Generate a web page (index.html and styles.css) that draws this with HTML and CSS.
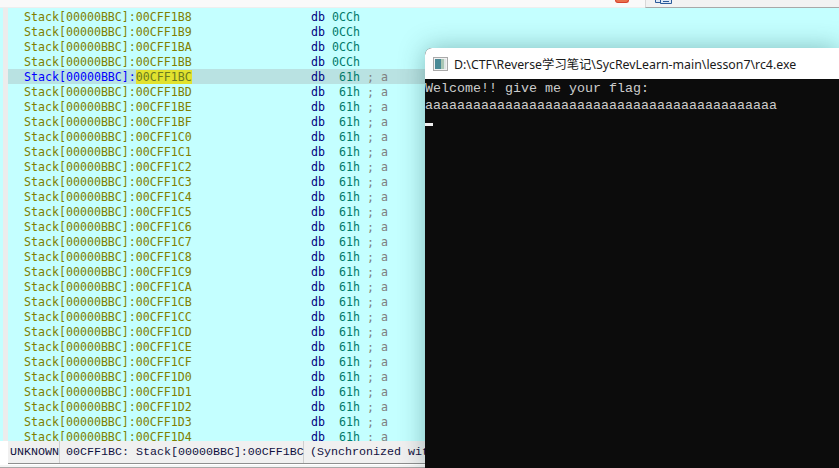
FILE: index.html
```html
<!DOCTYPE html>
<html lang="en">
<head>
<meta charset="utf-8">
<title>IDA stack view and console</title>
<link rel="stylesheet" href="styles.css">
</head>
<body>
<div class="topbar">
  <div class="top-left"><span class="red-tip"></span></div>
  <div class="top-right">
    <svg class="top-icon" width="18" height="4" viewBox="0 0 18 4"><path d="M0.5 0V2.5H5.5V0M5.5 0V3.5H16.5V0" fill="#dce8f6" stroke="#2a5a9a"/><path d="M8 1.5H14" stroke="#2a5a9a"/></svg>
  </div>
</div>
<div class="main">
  <div class="gutter"><span class="gutter-edge"></span><span class="gutter-bar"></span></div>
  <div class="listing">
    <div class="row"><span class="addr">Stack[00000BBC]:00CFF1B8</span><span class="op">db</span><span class="num wide">0CCh</span></div>
    <div class="row"><span class="addr">Stack[00000BBC]:00CFF1B9</span><span class="op">db</span><span class="num wide">0CCh</span></div>
    <div class="row"><span class="addr">Stack[00000BBC]:00CFF1BA</span><span class="op">db</span><span class="num wide">0CCh</span></div>
    <div class="row"><span class="addr">Stack[00000BBC]:00CFF1BB</span><span class="op">db</span><span class="num wide">0CCh</span></div>
    <div class="row current"><span class="addr"><span class="prefix">Stack[00000BBC]:</span><span class="mark">00CFF1BC</span></span><span class="op">db</span><span class="num">61h</span><span class="cmt">; a</span></div>
    <div class="row"><span class="addr">Stack[00000BBC]:00CFF1BD</span><span class="op">db</span><span class="num">61h</span><span class="cmt">; a</span></div>
    <div class="row"><span class="addr">Stack[00000BBC]:00CFF1BE</span><span class="op">db</span><span class="num">61h</span><span class="cmt">; a</span></div>
    <div class="row"><span class="addr">Stack[00000BBC]:00CFF1BF</span><span class="op">db</span><span class="num">61h</span><span class="cmt">; a</span></div>
    <div class="row"><span class="addr">Stack[00000BBC]:00CFF1C0</span><span class="op">db</span><span class="num">61h</span><span class="cmt">; a</span></div>
    <div class="row"><span class="addr">Stack[00000BBC]:00CFF1C1</span><span class="op">db</span><span class="num">61h</span><span class="cmt">; a</span></div>
    <div class="row"><span class="addr">Stack[00000BBC]:00CFF1C2</span><span class="op">db</span><span class="num">61h</span><span class="cmt">; a</span></div>
    <div class="row"><span class="addr">Stack[00000BBC]:00CFF1C3</span><span class="op">db</span><span class="num">61h</span><span class="cmt">; a</span></div>
    <div class="row"><span class="addr">Stack[00000BBC]:00CFF1C4</span><span class="op">db</span><span class="num">61h</span><span class="cmt">; a</span></div>
    <div class="row"><span class="addr">Stack[00000BBC]:00CFF1C5</span><span class="op">db</span><span class="num">61h</span><span class="cmt">; a</span></div>
    <div class="row"><span class="addr">Stack[00000BBC]:00CFF1C6</span><span class="op">db</span><span class="num">61h</span><span class="cmt">; a</span></div>
    <div class="row"><span class="addr">Stack[00000BBC]:00CFF1C7</span><span class="op">db</span><span class="num">61h</span><span class="cmt">; a</span></div>
    <div class="row"><span class="addr">Stack[00000BBC]:00CFF1C8</span><span class="op">db</span><span class="num">61h</span><span class="cmt">; a</span></div>
    <div class="row"><span class="addr">Stack[00000BBC]:00CFF1C9</span><span class="op">db</span><span class="num">61h</span><span class="cmt">; a</span></div>
    <div class="row"><span class="addr">Stack[00000BBC]:00CFF1CA</span><span class="op">db</span><span class="num">61h</span><span class="cmt">; a</span></div>
    <div class="row"><span class="addr">Stack[00000BBC]:00CFF1CB</span><span class="op">db</span><span class="num">61h</span><span class="cmt">; a</span></div>
    <div class="row"><span class="addr">Stack[00000BBC]:00CFF1CC</span><span class="op">db</span><span class="num">61h</span><span class="cmt">; a</span></div>
    <div class="row"><span class="addr">Stack[00000BBC]:00CFF1CD</span><span class="op">db</span><span class="num">61h</span><span class="cmt">; a</span></div>
    <div class="row"><span class="addr">Stack[00000BBC]:00CFF1CE</span><span class="op">db</span><span class="num">61h</span><span class="cmt">; a</span></div>
    <div class="row"><span class="addr">Stack[00000BBC]:00CFF1CF</span><span class="op">db</span><span class="num">61h</span><span class="cmt">; a</span></div>
    <div class="row"><span class="addr">Stack[00000BBC]:00CFF1D0</span><span class="op">db</span><span class="num">61h</span><span class="cmt">; a</span></div>
    <div class="row"><span class="addr">Stack[00000BBC]:00CFF1D1</span><span class="op">db</span><span class="num">61h</span><span class="cmt">; a</span></div>
    <div class="row"><span class="addr">Stack[00000BBC]:00CFF1D2</span><span class="op">db</span><span class="num">61h</span><span class="cmt">; a</span></div>
    <div class="row"><span class="addr">Stack[00000BBC]:00CFF1D3</span><span class="op">db</span><span class="num">61h</span><span class="cmt">; a</span></div>
    <div class="row"><span class="addr">Stack[00000BBC]:00CFF1D4</span><span class="op">db</span><span class="num">61h</span><span class="cmt">; a</span></div>
  </div>
</div>
<div class="status">
  <span class="cell cell-type">UNKNOWN</span>
  <span class="cell cell-addr">00CFF1BC: Stack[00000BBC]:00CFF1BC</span>
  <span class="cell cell-sync">(Synchronized with Hex View-1)</span>
</div>
<div class="footer"></div>

<section class="console">
  <header class="console-title">
    <svg class="console-icon" width="15" height="14" viewBox="0 0 15 14">
      <rect x="0.5" y="0.5" width="14" height="13" fill="#f2f2f2" stroke="#a9a9a9"/>
      <rect x="2" y="2" width="6" height="10" fill="#4a8a96"/>
      <rect x="8" y="2" width="3" height="10" fill="#a9c6b4"/>
      <rect x="11" y="2" width="2" height="10" fill="#dfe6e6"/>
    </svg>
    <span class="console-path">D:\CTF\Reverse学习笔记\SycRevLearn-main\lesson7\rc4.exe</span>
  </header>
  <div class="console-body">
    <div class="line">Welcome!! give me your flag:</div>
    <div class="line">aaaaaaaaaaaaaaaaaaaaaaaaaaaaaaaaaaaaaaaaaaaa</div>
    <div class="caret"></div>
  </div>
</section>
</body>
</html>
```

FILE: styles.css
```css
* { box-sizing: border-box; }
html, body { margin: 0; padding: 0; }
body {
  width: 839px;
  height: 468px;
  overflow: hidden;
  position: relative;
  display: flex;
  flex-direction: column;
  background: #fff;
}
.topbar {
  height: 8px;
  display: flex;
  flex: none;
}
.top-left {
  width: 645px;
  background: #f9f9f9;
  border-bottom: 1px solid #eeeeee;
  padding-left: 615px;
}
.red-tip {
  display: block;
  width: 14px;
  height: 3px;
  background: #e8704c;
  border: 1px solid #d8402c;
  border-top: 0;
  border-radius: 0 0 3px 3px;
}
.top-right {
  flex: 1;
  background: #f2f2f2;
  border-left: 1px solid #d8d8d8;
  border-bottom: 1px solid #a8a8a8;
  padding-left: 9px;
  line-height: 0;
}
.top-icon { display: block; }
.main {
  display: flex;
  height: 433px;
  flex: none;
  overflow: hidden;
  background: #c4ffff;
}
.gutter {
  width: 8px;
  flex: none;
  display: flex;
}
.gutter-edge { width: 3px; background: #c4ffff; }
.gutter-bar { width: 5px; background: #ececec; }
.listing {
  flex: 1;
  padding-top: 1px;
  font-family: "DejaVu Sans Mono", monospace;
  font-size: 11.62px;
}
.row {
  height: 15px;
  line-height: 17px;
  display: flex;
  padding-left: 16px;
  white-space: pre;
}
.row.current { background: #b9e2e2; }
.addr { width: 287px; color: #808000; }
.prefix { color: #0000ff; }
.mark { background: #e2e22e; color: #6a7a20; }
.op { width: 28px; color: #000080; }
.num { width: 28px; color: #007a6a; }
.num.wide { margin-left: -7px; }
.cmt { color: #808080; }
.status {
  height: 23px;
  flex: none;
  display: flex;
  align-items: stretch;
  background: #f0f0f0;
  border-bottom: 1px solid #8e8e8e;
  margin-left: 8px;
  font-family: "Liberation Mono", monospace;
  font-size: 11.67px;
  line-height: 22px;
  color: #101040;
  white-space: pre;
  overflow: hidden;
}
.cell { padding: 0 2px; }
.cell-type { width: 52px; border-right: 1px solid #cfcfcf; }
.cell-addr { width: 244px; padding-left: 6px; border-right: 1px solid #cfcfcf; }
.cell-sync { padding-left: 6px; }
.footer {
  flex: 1;
  background: #f4f4f4;
  border-top: 1px solid #fff;
  border-bottom: 1px solid #a8a8a8;
}
.console {
  position: absolute;
  left: 425px;
  top: 48px;
  width: 414px;
  height: 420px;
  border-radius: 7px 0 0 0;
  box-shadow: 0 0 26px rgba(0, 60, 60, 0.34);
  background: #0c0c0c;
  overflow: hidden;
}
.console-title {
  height: 31px;
  background: #fff;
  display: flex;
  align-items: center;
  padding-left: 8px;
}
.console-icon { flex: none; }
.console-path {
  margin-left: 6px;
  font-family: "Noto Sans", "Noto Sans CJK SC", sans-serif;
  font-size: 12.33px;
  color: #1a1a1a;
  white-space: pre;
}
.console-body {
  padding-top: 1px;
  font-family: "Liberation Mono", monospace;
  font-size: 13.33px;
  line-height: 17px;
  color: #cccccc;
}
.line { height: 17px; white-space: pre; }
.caret {
  width: 8px;
  height: 3px;
  margin-top: 9px;
  background: #f0f0f0;
}
```
